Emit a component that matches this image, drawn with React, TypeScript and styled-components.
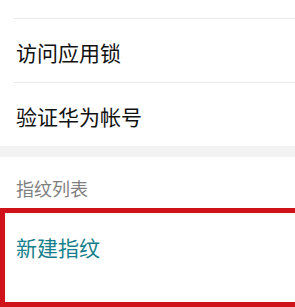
import React from "react";
import styled, { createGlobalStyle } from "styled-components";

const Global = createGlobalStyle`
  html, body {
    margin: 0;
    padding: 0;
    background: #ffffff;
    overflow: hidden;
  }
  body {
    font-family: "Noto Sans CJK SC", "Noto Sans", sans-serif;
  }
`;

const Page = styled.div`
  width: 295px;
  height: 307px;
  overflow: hidden;
  background: #ffffff;
  display: flex;
  flex-direction: column;
`;

const TopGap = styled.div`
  height: 18px;
  flex: none;
`;

const Row = styled.div`
  flex: none;
  height: 64px;
  box-sizing: border-box;
  margin-left: 14px;
  padding: 2px 0 0 2px;
  border-top: 1px solid #e8e8e8;
  display: flex;
  align-items: center;
  font-size: 21px;
  font-weight: 400;
  color: #111111;
`;

const Band = styled.div`
  flex: none;
  height: 11px;
  background: #f2f2f2;
`;

const Header = styled.div`
  flex: none;
  height: 51px;
  box-sizing: border-box;
  padding: 18px 0 0 16px;
  font-size: 18px;
  line-height: 26px;
  color: #7f7f7f;
`;

const Highlight = styled.div`
  flex: none;
  width: 310px;
  height: 99px;
  box-sizing: border-box;
  border: 5px solid #d0121b;
  border-right: none;
  padding: 19px 0 0 11px;
  font-size: 21px;
  font-weight: 400;
  line-height: 30px;
  color: #167f8d;
`;

export default function App() {
  return (
    <>
      <Global />
      <Page>
        <TopGap />
        <Row>访问应用锁</Row>
        <Row>验证华为帐号</Row>
        <Band />
        <Header>指纹列表</Header>
        <Highlight>新建指纹</Highlight>
      </Page>
    </>
  );
}
